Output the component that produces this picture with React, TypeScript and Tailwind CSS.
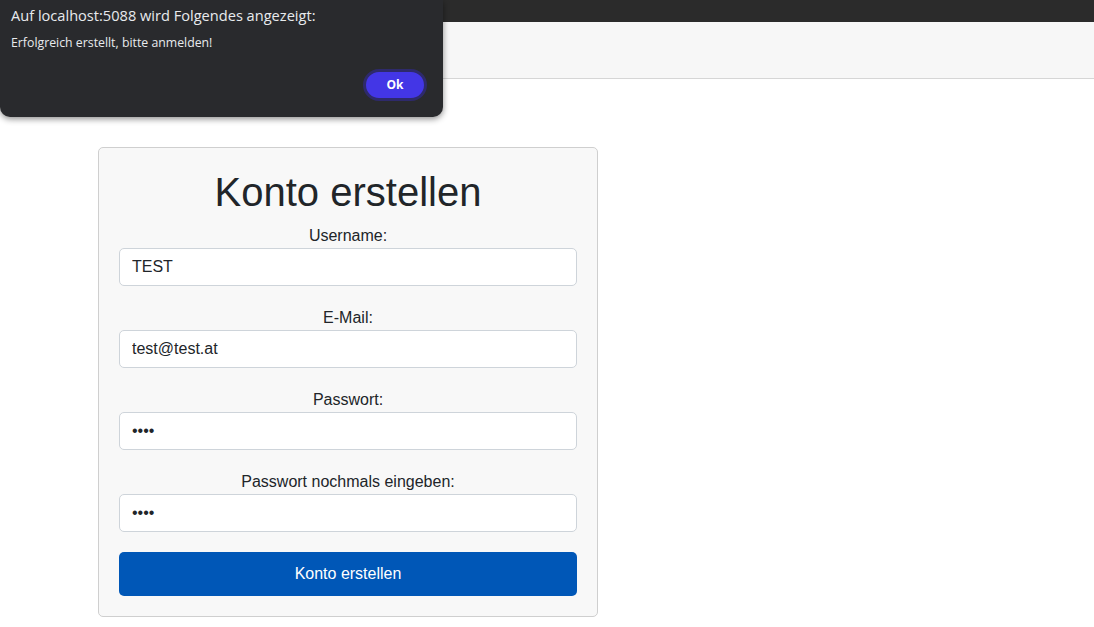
export default function App() {
  const fields = [
    { label: "Username:", value: "TEST", type: "text" },
    { label: "E-Mail:", value: "test@test.at", type: "email" },
    { label: "Passwort:", value: "test", type: "password" },
    { label: "Passwort nochmals eingeben:", value: "test", type: "password" },
  ];

  return (
    <div className="relative min-h-screen w-full bg-white font-['Liberation_Sans',Arial,sans-serif] text-[#212529]">
      {/* browser top strip */}
      <div className="h-[22px] w-full bg-[#2b2b2b]" />

      {/* navbar */}
      <nav className="h-[57px] w-full border-b border-[#d6d6d6] bg-[#f7f7f7]" />

      {/* register card */}
      <main className="pl-[98px] pt-[68px]">
        <div className="w-[500px] rounded-[5px] border border-[#cfcfcf] bg-[#f8f8f8] px-5 pt-5 pb-5">
          <h1 className="mb-2 text-center text-[40px] leading-[48px] font-normal">Konto erstellen</h1>
          <form className="flex flex-col gap-5" onSubmit={(e) => e.preventDefault()}>
            {fields.map((f) => (
              <div key={f.label} className="flex flex-col">
                <label className="text-center text-base leading-6">{f.label}</label>
                <input
                  type={f.type}
                  defaultValue={f.value}
                  className="h-[38px] w-full rounded-[5px] border border-[#ced4da] bg-white px-3 text-base text-[#212529] outline-none"
                />
              </div>
            ))}
            <button
              type="submit"
              className="h-[44px] w-full rounded-[5px] bg-[#0057b7] text-base text-white"
            >
              Konto erstellen
            </button>
          </form>
        </div>
      </main>

      {/* alert dialog */}
      <div className="absolute top-0 left-0 h-[117px] w-[443px] rounded-b-[10px] bg-[#292a2d] font-['Open_Sans',sans-serif] text-[#e8eaed] shadow-[0_2px_6px_rgba(0,0,0,0.45)]">
        <div className="pt-[4px] pl-[11px] text-[14.6px] leading-[22px]">Auf localhost:5088 wird Folgendes angezeigt:</div>
        <div className="pt-[8px] pl-[11px] text-[12.3px] leading-[18px]">Erfolgreich erstellt, bitte anmelden!</div>
        <div className="flex justify-end pt-[17px] pr-[16px]">
          <button className="flex h-[32px] w-[64px] items-center justify-center rounded-full border-[3px] border-[#2e2a6b] bg-[#4336e6] text-[12px] font-bold text-white">
            Ok
          </button>
        </div>
      </div>
    </div>
  );
}
